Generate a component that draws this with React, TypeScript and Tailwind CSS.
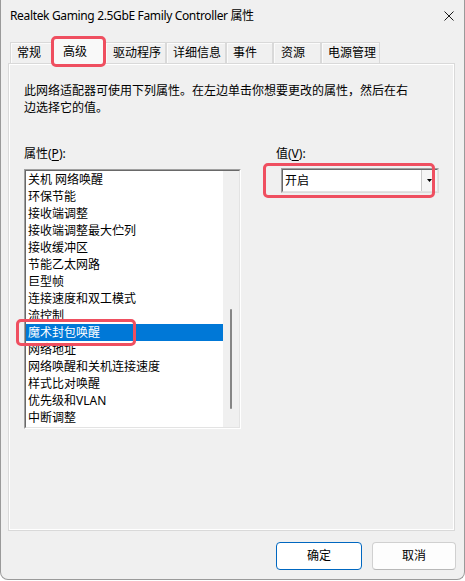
const tabs = [
  { label: "常规", w: "w-[43px]", pl: "pl-[6px]" },
  { label: "高级", w: "w-[52px]", pl: "pl-[9px]", active: true },
  { label: "驱动程序", w: "w-[61px]", pl: "pl-[7px]" },
  { label: "详细信息", w: "w-[60px]", pl: "pl-[6px]" },
  { label: "事件", w: "w-[47px]", pl: "pl-[6px]" },
  { label: "资源", w: "w-[48px]", pl: "pl-[7px]" },
  { label: "电源管理", w: "w-[59px]", pl: "pl-[6px]" },
];

const props = [
  "关机 网络唤醒",
  "环保节能",
  "接收端调整",
  "接收端调整最大伫列",
  "接收缓冲区",
  "节能乙太网路",
  "巨型帧",
  "连接速度和双工模式",
  "流控制",
  "魔术封包唤醒",
  "网络地址",
  "网络唤醒和关机连接速度",
  "样式比对唤醒",
  "优先级和VLAN",
  "中断调整",
];

export default function App() {
  return (
    <div className="w-[465px] h-[581px] bg-white">
      <div className="relative w-[465px] h-[580px] bg-[#f0f0f0] border-x border-b border-[#9a9a9a] rounded-b-[8px] text-[12px] text-black font-['Segoe_UI','Noto_Sans','Noto_Sans_CJK_SC',sans-serif] flex flex-col">

        {/* Title bar */}
        <div className="h-[31px] flex items-center justify-between pl-[9px] pr-[9px]">
          <span className="leading-none tracking-[-0.35px]">Realtek Gaming 2.5GbE Family Controller 属性</span>
          <svg width="10" height="10" viewBox="0 0 10 10" className="mr-[1px]">
            <path d="M0.5 0.5 L9.5 9.5 M9.5 0.5 L0.5 9.5" stroke="#1a1a1a" strokeWidth="1" />
          </svg>
        </div>

        {/* Tabs */}
        <div className="h-[32px] flex items-end pl-[9px] relative z-10">
          {tabs.map((t) =>
            t.active ? (
              <div
                key={t.label}
                className={`${t.w} ${t.pl} h-[26px] -mb-px flex items-center bg-[#f9f9f9] border border-b-0 border-[#d9d9d9]`}
              >
                {t.label}
              </div>
            ) : (
              <div
                key={t.label}
                className={`${t.w} ${t.pl} h-[21px] flex items-center border border-b-0 border-[#d9d9d9] shadow-[inset_1px_1px_0_#fbfbfb]`}
              >
                {t.label}
              </div>
            )
          )}
        </div>

        {/* Page */}
        <div className="ml-[7px] w-[447px] h-[468px] border border-[#d9d9d9] shadow-[inset_1px_1px_0_#fff,inset_-1px_-1px_0_#fff] pl-[15px] pt-[18px]">
          <p className="leading-[17px]">
            此网络适配器可使用下列属性。在左边单击你想要更改的属性，然后在右
            <br />
            边选择它的值。
          </p>

          <div className="flex mt-[29px]">
            {/* left column */}
            <div className="w-[217px]">
              <div className="leading-[17px]">
                属性(<span className="underline underline-offset-2">P</span>):
              </div>
              <div className="mt-[7px] h-[260px] border-t border-l border-[#a0a0a0] border-b border-r border-b-white border-r-white">
                <div className="h-full border-t border-l border-[#696969] border-b border-r border-b-[#e3e3e3] border-r-[#e3e3e3] bg-white flex">
                  <div className="w-[197px]">
                    {props.map((p, i) => (
                      <div
                        key={p}
                        className={`h-[17px] leading-[17px] pl-[2px] whitespace-nowrap ${
                          i === 9 ? "bg-[#0078d7] text-white" : ""
                        }`}
                      >
                        {p}
                      </div>
                    ))}
                  </div>
                  <div className="flex-1 bg-[#f0f0f0] flex justify-center">
                    <div className="mt-[138px] w-[2px] h-[100px] bg-[#858585] rounded-full" />
                  </div>
                </div>
              </div>
            </div>

            {/* right column */}
            <div className="ml-[35px]">
              <div className="leading-[17px]">
                值(<span className="underline underline-offset-2">V</span>):
              </div>
              <div className="mt-[6px] ml-[5px] w-[158px] h-[25px] border-t border-l border-[#a0a0a0] border-b border-r border-b-[#dcdcdc] border-r-[#dcdcdc]">
                <div className="h-full flex bg-white border-t border-l border-[#696969] border-b border-r border-b-[#e3e3e3] border-r-[#e3e3e3]">
                  <div className="flex-1 pl-[2px] flex items-center">开启</div>
                  <div className="w-[16px] bg-[#f5f5f5] border-l border-[#c8c8c8] flex items-center justify-center">
                    <svg width="5" height="3" viewBox="0 0 5 3">
                      <polygon points="0,0 5,0 2.5,3" fill="#000" />
                    </svg>
                  </div>
                </div>
              </div>
            </div>
          </div>
        </div>

        {/* Buttons */}
        <div className="flex justify-end gap-[10px] mt-[11px] pr-[8px]">
          <button className="w-[86px] h-[28px] bg-white border border-[#0067c0] rounded-[4px]">确定</button>
          <button className="w-[84px] h-[28px] bg-[#fdfdfd] border border-[#d0d0d0] border-b-[#b8b8b8] rounded-[4px]">取消</button>
        </div>

        {/* Annotation highlights */}
        <div className="absolute left-[50px] top-[36px] w-[55px] h-[31px] border-[3px] border-[#ef4f60] rounded-[5px] z-20" />
        <div className="absolute left-[15px] top-[319px] w-[120px] h-[27px] border-[3px] border-[#ef4f60] rounded-[5px] z-20" />
        <div className="absolute left-[262px] top-[163px] w-[172px] h-[35px] border-[3px] border-[#ef4f60] rounded-[5px] z-20" />
      </div>
    </div>
  );
}
